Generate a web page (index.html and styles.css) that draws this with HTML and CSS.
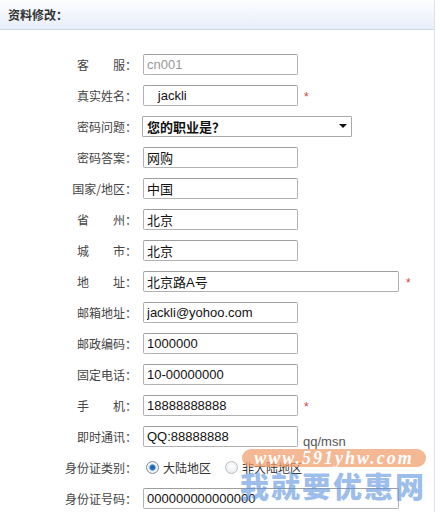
FILE: index.html
```html
<!DOCTYPE html>
<html lang="zh-CN">
<head>
<meta charset="utf-8">
<title>资料修改</title>
<link rel="stylesheet" href="styles.css">
</head>
<body>
<div class="panel">
  <div class="panel-head">资料修改：</div>
  <form class="form">
    <div class="row">
      <label class="lbl">客　　服：</label>
      <input class="field disabled" type="text" value="cn001" readonly>
    </div>
    <div class="row">
      <label class="lbl">真实姓名：</label>
      <input class="field" type="text" value="   jackli">
      <span class="req">*</span>
    </div>
    <div class="row">
      <label class="lbl">密码问题：</label>
      <div class="select-wrap">
        <select class="select"><option>您的职业是？</option></select>
      </div>
    </div>
    <div class="row">
      <label class="lbl">密码答案：</label>
      <input class="field" type="text" value="网购">
    </div>
    <div class="row">
      <label class="lbl">国家/地区：</label>
      <input class="field" type="text" value="中国">
    </div>
    <div class="row">
      <label class="lbl">省　　州：</label>
      <input class="field" type="text" value="北京">
    </div>
    <div class="row">
      <label class="lbl">城　　市：</label>
      <input class="field" type="text" value="北京">
    </div>
    <div class="row">
      <label class="lbl">地　　址：</label>
      <input class="field wide" type="text" value="北京路A号">
      <span class="req req-wide">*</span>
    </div>
    <div class="row">
      <label class="lbl">邮箱地址：</label>
      <input class="field" type="text" value="jackli@yohoo.com">
    </div>
    <div class="row">
      <label class="lbl">邮政编码：</label>
      <input class="field" type="text" value="1000000">
    </div>
    <div class="row">
      <label class="lbl">固定电话：</label>
      <input class="field" type="text" value="10-00000000">
    </div>
    <div class="row">
      <label class="lbl">手　　机：</label>
      <input class="field" type="text" value="18888888888">
      <span class="req">*</span>
    </div>
    <div class="row">
      <label class="lbl">即时通讯：</label>
      <input class="field" type="text" value="QQ:88888888">
      <span class="hint">qq/msn</span>
    </div>
    <div class="row">
      <label class="lbl">身份证类别：</label>
      <div class="radios">
        <label class="radio"><input type="radio" name="idt" checked><span>大陆地区</span></label>
        <label class="radio"><input type="radio" name="idt"><span>非大陆地区</span></label>
      </div>
    </div>
    <div class="row">
      <label class="lbl">身份证号码：</label>
      <input class="field wide" type="text" value="000000000000000">
    </div>
  </form>
  <div class="watermark">
    <div class="wm-url">www.591yhw.com</div>
    <div class="wm-name">我就要优惠网</div>
  </div>
</div>
</body>
</html>
```
FILE: styles.css
```css
html, body {
  margin: 0;
  padding: 0;
  background: #ffffff;
}
body {
  font-family: "Liberation Sans", "Noto Sans CJK SC", sans-serif;
  color: #333;
  overflow: hidden;
}
.panel {
  position: relative;
  width: 434px;
  height: 512px;
  border-right: 1px solid #dbe4ef;
  box-sizing: content-box;
}
.panel-head {
  height: 29px;
  line-height: 30px;
  padding-left: 8px;
  font-size: 12px;
  font-weight: bold;
  color: #333;
  background: linear-gradient(#fdfeff, #e7eef9);
  border-bottom: 1px solid #cdd7e3;
  font-family: "Noto Sans CJK SC", sans-serif;
}
.form {
  margin: 0;
  padding-top: 24px;
  display: flex;
  flex-direction: column;
  gap: 10px;
}
.row {
  display: flex;
  align-items: center;
  height: 21px;
}
.lbl {
  flex: none;
  text-align: right;
  font-size: 12px;
  color: #444;
  font-family: "Noto Sans CJK SC", sans-serif;
  padding-right: 6px;
  box-sizing: border-box;
  width: 143px;
}
.field {
  box-sizing: border-box;
  width: 155px;
  height: 21px;
  margin: 0;
  padding: 0 3px;
  border: 1px solid #b2b2b2;
  border-top-color: #9e9e9e;
  border-radius: 2px;
  font-family: "Liberation Sans", "Noto Sans CJK SC", sans-serif;
  font-size: 13px;
  color: #111;
  background: #fff;
  outline: none;
}
.field.disabled {
  color: #999;
}
.field.wide {
  width: 256px;
}
.req {
  color: #e23a3a;
  font-size: 12px;
  margin-left: 6px;
  line-height: 1;
  padding-top: 3px;
}
.req-wide {
  margin-left: 7px;
}
.hint {
  align-self: flex-end;
  margin-left: 5px;
  font-size: 13px;
  color: #555;
  line-height: 13px;
  margin-bottom: -1px;
}
.select-wrap {
  position: relative;
  margin-left: -1px;
}
.select {
  appearance: none;
  -webkit-appearance: none;
  box-sizing: border-box;
  width: 210px;
  height: 21px;
  margin: 0;
  padding: 0 4px;
  border: 1px solid #aaa;
  border-radius: 1px;
  background: #fff;
  font-family: "Noto Sans CJK SC", sans-serif;
  font-size: 13px;
  font-weight: bold;
  color: #111;
  outline: none;
}
.select-wrap::after {
  content: "";
  position: absolute;
  right: 5px;
  top: 8px;
  border-left: 4px solid transparent;
  border-right: 4px solid transparent;
  border-top: 4px solid #111;
  pointer-events: none;
}
.radios {
  display: flex;
  align-items: center;
  gap: 14px;
  padding-left: 3px;
}
.radio {
  display: flex;
  align-items: center;
  gap: 4px;
  font-size: 12px;
  color: #333;
  font-family: "Noto Sans CJK SC", sans-serif;
}
.radio input {
  appearance: none;
  -webkit-appearance: none;
  width: 13px;
  height: 13px;
  margin: 0;
  border: 1px solid #b9bec4;
  border-radius: 50%;
  background: radial-gradient(circle at 50% 40%, #ffffff, #e4e6e8);
  box-sizing: border-box;
}
.radio input:checked {
  border-color: #7f8a96;
  background: radial-gradient(circle, #1c5a9e 0, #2f79c4 2.5px, #e9eef4 3.6px, #f7f8fa 6px);
}
.watermark {
  position: absolute;
  left: 240px;
  top: 449px;
  width: 186px;
  pointer-events: none;
}
.wm-url {
  margin-left: 2px;
  height: 18px;
  line-height: 18px;
  border-radius: 9px;
  background: rgba(242, 160, 112, 0.75);
  color: #fff;
  font-family: "Liberation Serif", serif;
  font-style: italic;
  font-weight: bold;
  font-size: 18px;
  letter-spacing: 2px;
  text-align: center;
}
.wm-name {
  margin-top: 3px;
  font-family: "Noto Sans CJK SC", sans-serif;
  font-weight: 900;
  font-size: 29px;
  line-height: 30px;
  letter-spacing: 2px;
  color: rgba(90, 145, 220, 0.6);
  white-space: nowrap;
}
```
